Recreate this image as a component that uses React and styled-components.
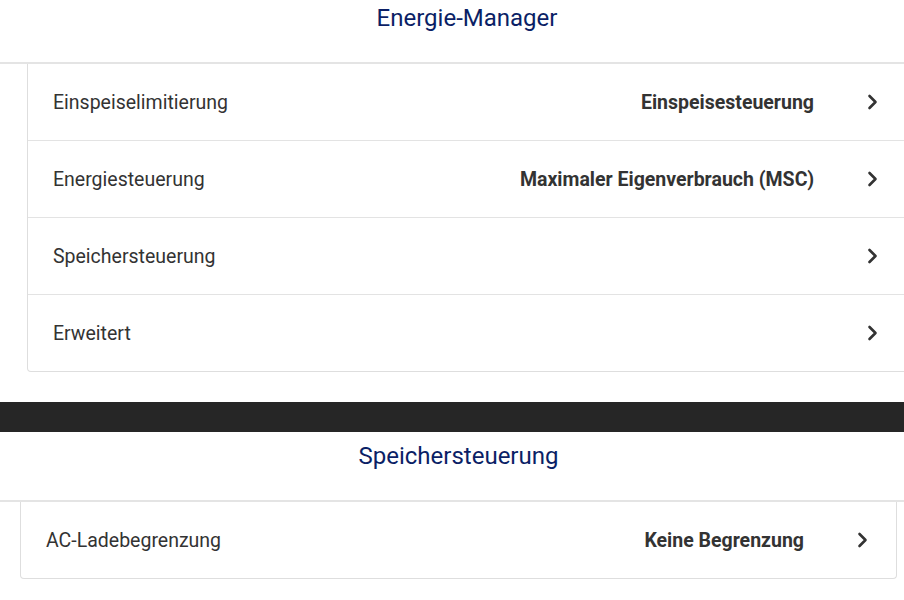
import React from 'react';
import styled, { createGlobalStyle } from 'styled-components';

const GlobalStyle = createGlobalStyle`
  html, body {
    margin: 0;
    padding: 0;
    background: #fff;
  }
  body {
    font-family: Roboto, "Liberation Sans", sans-serif;
    color: #333;
  }
`

const Page = styled.div`
  width: 904px;
  height: 600px;
  overflow: hidden;
  display: flex;
  flex-direction: column;
`

const Screen = styled.section`
  width: ${props => props.width}px;
  flex-shrink: 0;
  padding-bottom: ${props => props.bottom}px;
`

const Header = styled.header`
  height: ${props => props.height}px;
  display: flex;
  justify-content: center;
  align-items: flex-start;
  padding-top: ${props => props.top}px;
  box-sizing: border-box;
  border-bottom: 2px solid #e4e4e4;
`

const Title = styled.h1`
  margin: 0;
  font-size: 24px;
  font-weight: 400;
  line-height: 28px;
  color: #0b1f66;
`

const Card = styled.div`
  margin: 0 ${props => props.side}px;
  border: 1px solid #dedede;
  border-top: none;
  border-radius: 0 0 4px 4px;
  background: #fff;
`

const Row = styled.div`
  height: 76px;
  display: flex;
  align-items: center;
  padding: 0 28px 0 25px;
  font-size: 19.5px;
  border-top: ${props => (props.first ? 'none' : '1px solid #e3e3e3')};
`

const Label = styled.span`
  flex: 1;
  color: #333;
`

const Value = styled.span`
  font-weight: 700;
  color: #333;
  margin-right: 53px;
`

const Divider = styled.div`
  height: 30px;
  background: #262626;
  flex-shrink: 0;
`

const Chevron = () => (
  <svg width="11" height="16" viewBox="0 0 11 16">
    <polyline
      points="2.5,2 8.5,8 2.5,14"
      fill="none"
      stroke="#333"
      strokeWidth="2.6"
      strokeLinecap="round"
      strokeLinejoin="round"
    />
  </svg>
)

const energyRows = [
  { label: 'Einspeiselimitierung', value: 'Einspeisesteuerung' },
  { label: 'Energiesteuerung', value: 'Maximaler Eigenverbrauch (MSC)' },
  { label: 'Speichersteuerung' },
  { label: 'Erweitert' },
]

const storageRows = [
  { label: 'AC-Ladebegrenzung', value: 'Keine Begrenzung' },
]

const MenuCard = ({ rows, side }) => (
  <Card side={side}>
    {rows.map((row, i) => (
      <Row key={row.label} first={i === 0}>
        <Label>{row.label}</Label>
        {row.value && <Value>{row.value}</Value>}
        <Chevron />
      </Row>
    ))}
  </Card>
)

export default function App() {
  return (
    <Page>
      <GlobalStyle />
      <Screen width={934} bottom={30}>
        <Header height={64} top={4}>
          <Title>Energie-Manager</Title>
        </Header>
        <MenuCard rows={energyRows} side={27} />
      </Screen>
      <Divider />
      <Screen width={917} bottom={0}>
        <Header height={70} top={10}>
          <Title>Speichersteuerung</Title>
        </Header>
        <MenuCard rows={storageRows} side={20} />
      </Screen>
    </Page>
  )
}
